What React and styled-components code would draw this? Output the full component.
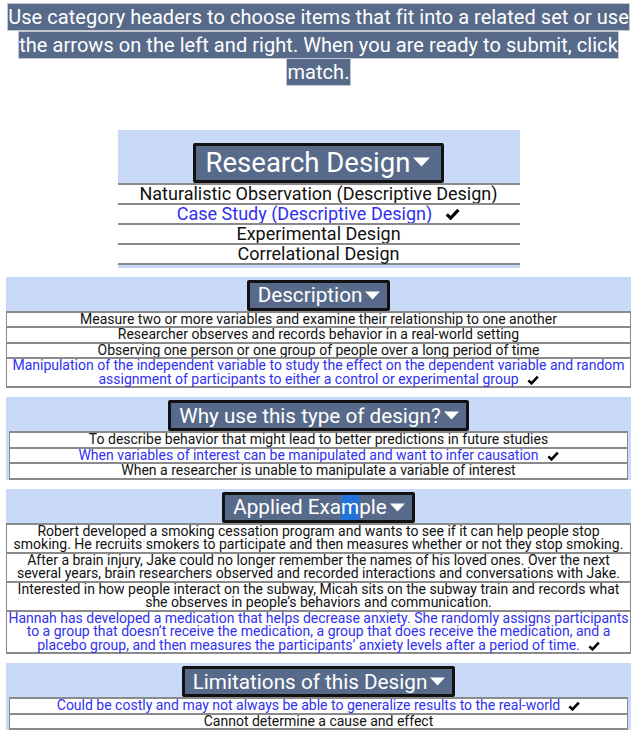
import React from 'react'
import styled, { createGlobalStyle } from 'styled-components'

const GlobalStyle = createGlobalStyle`
  body {
    margin: 0;
    background: #fff;
    font-family: Roboto, "Liberation Sans", sans-serif;
  }
`

// lines: where the original breaks a long example
const groups = [
  {
    title: 'Research Design',
    narrow: true,
    items: [
      { lines: ['Naturalistic Observation (Descriptive Design)'] },
      { lines: ['Case Study (Descriptive Design)'], picked: true },
      { lines: ['Experimental Design'] },
      { lines: ['Correlational Design'] },
    ],
  },
  {
    title: 'Description',
    items: [
      { lines: ['Measure two or more variables and examine their relationship to one another'] },
      { lines: ['Researcher observes and records behavior in a real-world setting'] },
      { lines: ['Observing one person or one group of people over a long period of time'] },
      {
        lines: [
          'Manipulation of the independent variable to study the effect on the dependent variable and random',
          'assignment of participants to either a control or experimental group',
        ],
        picked: true,
      },
    ],
  },
  {
    title: 'Why use this type of design?',
    inset: true,
    items: [
      { lines: ['To describe behavior that might lead to better predictions in future studies'] },
      { lines: ['When variables of interest can be manipulated and want to infer causation'], picked: true },
      { lines: ['When a researcher is unable to manipulate a variable of interest'] },
    ],
  },
  {
    title: 'Applied Example',
    items: [
      {
        lines: [
          'Robert developed a smoking cessation program and wants to see if it can help people stop',
          'smoking. He recruits smokers to participate and then measures whether or not they stop smoking.',
        ],
      },
      {
        lines: [
          'After a brain injury, Jake could no longer remember the names of his loved ones. Over the next',
          'several years, brain researchers observed and recorded interactions and conversations with Jake.',
        ],
      },
      {
        lines: [
          'Interested in how people interact on the subway, Micah sits on the subway train and records what',
          'she observes in people\u2019s behaviors and communication.',
        ],
      },
      {
        lines: [
          'Hannah has developed a medication that helps decrease anxiety. She randomly assigns participants',
          'to a group that doesn\u2019t receive the medication, a group that does receive the medication, and a',
          'placebo group, and then measures the participants\u2019 anxiety levels after a period of time.',
        ],
        picked: true,
      },
    ],
  },
  {
    title: 'Limitations of this Design',
    inset: true,
    items: [
      { lines: ['Could be costly and may not always be able to generalize results to the real-world'], picked: true },
      { lines: ['Cannot determine a cause and effect'] },
    ],
  },
]

const Caret = ({ size }) => (
  <svg width={size} height={size * 0.6} viewBox="0 0 15 9">
    <polygon points="0,0.5 15,0.5 7.5,8.5" fill="#fff" />
  </svg>
)

const CheckMark = ({ big }) => (
  <CheckIcon $big={big} viewBox="0 0 16 13">
    <polyline points="1.8,7 6,11 14.4,2" fill="none" stroke="#000" strokeWidth="3.4" />
  </CheckIcon>
)

const App = () => {
  return (
    <Page>
      <GlobalStyle />
      <Instructions>
        <Marked>
          Use category headers to choose items that fit into a related set or use the arrows on the
          left and right. When you are ready to submit, click match.
        </Marked>
      </Instructions>

      <Groups>
        {groups.map((g) => (
          <Group key={g.title} $narrow={g.narrow}>
            <Header $narrow={g.narrow}>
              {g.title === 'Applied Example' ? (
                <span>
                  Applied Exa<Selected>m</Selected>ple
                </span>
              ) : (
                <span>{g.title}</span>
              )}
              <Caret size={g.narrow ? 17 : 15} />
            </Header>
            <List $inset={g.inset}>
              {g.items.map((item) => (
                <Item key={item.lines[0]} $narrow={g.narrow} $picked={item.picked}>
                  {item.lines.map((line, i) => (
                    <React.Fragment key={i}>
                      {i > 0 && <br />}
                      {line}
                    </React.Fragment>
                  ))}
                  {item.picked && <CheckMark big={g.narrow} />}
                </Item>
              ))}
            </List>
          </Group>
        ))}
      </Groups>
    </Page>
  )
}

export default App

const Page = styled.div`
  width: 637px;
  padding-top: 4px;
`

const Instructions = styled.p`
  margin: 0 4px;
  text-align: center;
  font-size: 20px;
  line-height: 27.5px;
  letter-spacing: 0.05px;
`

const Marked = styled.span`
  background: #586a89;
  color: #fff;
  padding: 1px 0;
  box-shadow: 0 0 0 1px #c3c8d2;
  -webkit-box-decoration-break: clone;
  box-decoration-break: clone;
`

const Groups = styled.div`
  display: flex;
  flex-direction: column;
  align-items: center;
  gap: 9px;
  margin-top: 43px;
`

const Group = styled.div`
  width: ${(p) => (p.$narrow ? '402px' : '625px')};
  background: #c9daf8;
  display: flex;
  flex-direction: column;
  align-items: center;
  padding: ${(p) => (p.$narrow ? '13px 0 3px' : '3px 0 0')};
  box-sizing: border-box;
`

const Header = styled.div`
  display: flex;
  align-items: center;
  gap: 3px;
  background: #586a89;
  color: #fff;
  border: 3px solid #111;
  border-radius: 2px;
  font-size: ${(p) => (p.$narrow ? '27.5px' : '20.7px')};
  height: ${(p) => (p.$narrow ? '34px' : '25px')};
  padding: ${(p) => (p.$narrow ? '0 11px 0 10px' : '0 7px 0 8px')};
`

const Selected = styled.span`
  display: inline-block;
  background: #2273d8;
  line-height: 25px;
`

const List = styled.div`
  align-self: stretch;
  margin: ${(p) => (p.$inset ? '0 3px' : '0')};
  display: flex;
  flex-direction: column;
`

const Item = styled.div`
  background: #fff;
  color: ${(p) => (p.$picked ? '#3030f2' : '#111')};
  text-align: center;
  white-space: nowrap;
  font-size: ${(p) => (p.$narrow ? '18px' : '14px')};
  line-height: ${(p) => (p.$narrow ? '18px' : '13.5px')};
  border-top: 2px solid #8a8a8a;
  border-left: ${(p) => (p.$narrow ? 'none' : '1px solid #8a8a8a')};
  border-right: ${(p) => (p.$narrow ? 'none' : '1px solid #8a8a8a')};
  &:last-child {
    border-bottom: 2px solid #8a8a8a;
  }
`

const CheckIcon = styled.svg`
  width: ${(p) => (p.$big ? '15px' : '12px')};
  height: ${(p) => (p.$big ? '12px' : '10px')};
  margin-left: ${(p) => (p.$big ? '13px' : '8px')};
  vertical-align: ${(p) => (p.$big ? '0' : '-1px')};
`
